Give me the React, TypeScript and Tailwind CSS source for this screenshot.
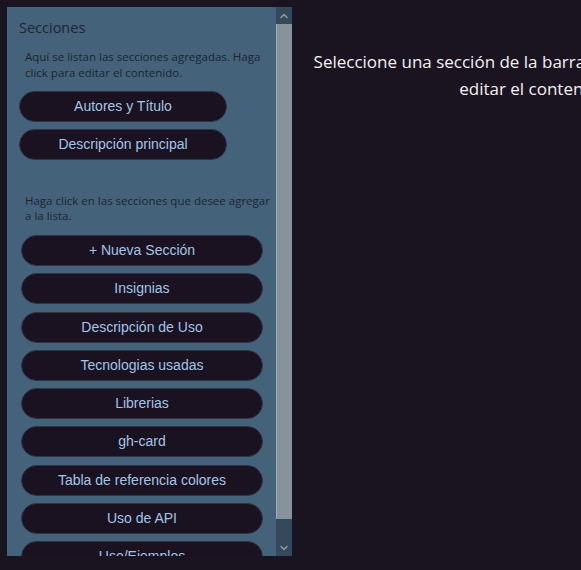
import { ChevronUp, ChevronDown } from "lucide-react"

const added = ["Autores y Título", "Descripción principal"]

const available = [
  "+ Nueva Sección",
  "Insignias",
  "Descripción de Uso",
  "Tecnologias usadas",
  "Librerias",
  "gh-card",
  "Tabla de referencia colores",
  "Uso de API",
  "Uso/Ejemplos",
]

function SectionButton({ label, className }: { label: string; className: string }) {
  return (
    <button
      className={`h-[31px] shrink-0 rounded-full border border-[#2f3543] bg-[#1a1220] text-[14px] text-[#a3c6e8] font-['Liberation_Sans',Arial,sans-serif] ${className}`}
    >
      {label}
    </button>
  )
}

export default function App() {
  return (
    <div className="h-[570px] w-[581px] overflow-hidden bg-[#1a1420]">
      <div className="flex w-[800px] pt-[7px] pl-[7px]">
        <aside className="flex h-[549px] w-[285px] shrink-0 bg-[#45627b]">
          <div className="flex-1 overflow-hidden font-['Open_Sans',sans-serif] text-[#1c2530]">
            <h2 className="pl-3 pt-[9px] text-[14.5px] leading-6">Secciones</h2>
            <p className="mt-[9px] pl-[18px] pr-1 text-[11.5px] leading-4">
              Aquí se listan las secciones agregadas. Haga click para editar el contenido.
            </p>
            <div className="mt-[10px] flex flex-col gap-[7px] pl-3">
              {added.map((s) => (
                <SectionButton key={s} label={s} className="w-[208px]" />
              ))}
            </div>
            <p className="mt-[33px] pl-[18px] pr-1 text-[11.5px] leading-[15px]">
              Haga click en las secciones que desee agregar a la lista.
            </p>
            <div className="mt-[12px] flex flex-col gap-[7.25px] pl-[14px] pr-[13px]">
              {available.map((s) => (
                <SectionButton key={s} label={s} className="w-full" />
              ))}
            </div>
          </div>
          <div className="flex w-[16px] flex-col bg-[#34495a]">
            <div className="flex h-[17px] items-center justify-center">
              <ChevronUp className="h-3 w-3 text-[#8a9aa8]" strokeWidth={3} />
            </div>
            <div className="h-[495px] border-l border-[#a3aeb6] bg-[#86939c]" />
            <div className="flex-1" />
            <div className="flex h-[17px] items-center justify-center">
              <ChevronDown className="h-3 w-3 text-[#8a9aa8]" strokeWidth={3} />
            </div>
          </div>
        </aside>
        <main className="w-[488px] shrink-0 pt-[41px] text-center font-['Open_Sans',sans-serif] text-[17px] leading-[27px] text-[#f2f2f2]">
          Seleccione una sección de la barra lateral izquierda para editar el contenido.
        </main>
      </div>
    </div>
  )
}
